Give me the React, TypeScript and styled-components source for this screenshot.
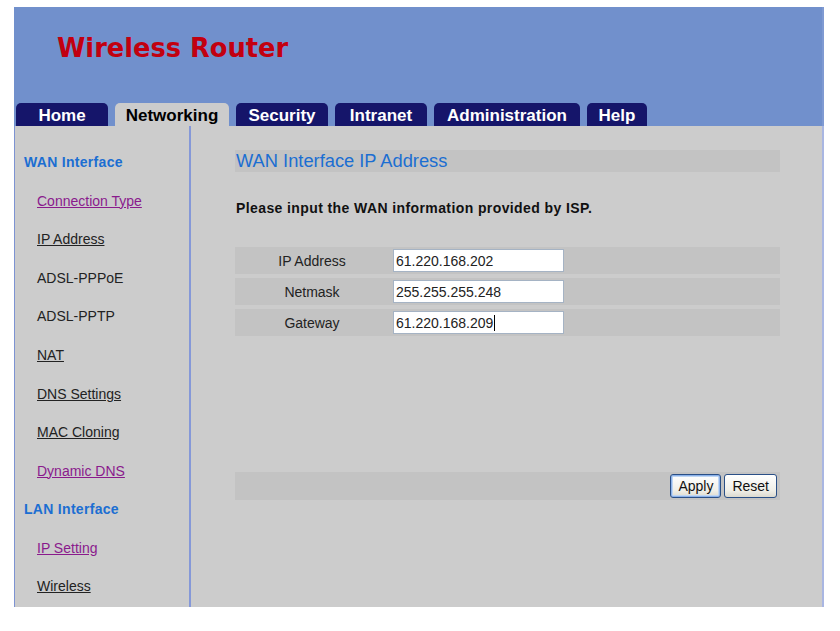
import React from "react";
import styled, { createGlobalStyle } from "styled-components";

const GlobalStyle = createGlobalStyle`
  html, body { margin: 0; padding: 0; background: #ffffff; }
  body { font-family: "Liberation Sans", Arial, sans-serif; }
  * { box-sizing: border-box; }
`;

const Frame = styled.div`
  margin: 7px 0 0 14px;
  width: 810px;
  display: flex;
  flex-direction: column;
`;

const Header = styled.header`
  height: 119px;
  background: #7190cc;
  display: flex;
  flex-direction: column;
  border-right: 2px solid #7f9ad2;
`;

const Title = styled.h1`
  margin: 28px 0 0 43px;
  font-family: "DejaVu Sans", Verdana, sans-serif;
  font-weight: bold;
  font-size: 25.7px;
  line-height: 26px;
  color: #c20010;
`;

const Tabs = styled.nav`
  margin-top: auto;
  display: flex;
  gap: 7px;
  padding-left: 2px;
`;

const Tab = styled.a<{ $active?: boolean; $width: number }>`
  height: 23px;
  width: ${(p) => p.$width}px;
  display: flex;
  align-items: center;
  justify-content: center;
  border-radius: 5px 5px 0 0;
  background: ${(p) => (p.$active ? "#cccccc" : "#15156a")};
  color: ${(p) => (p.$active ? "#000000" : "#ffffff")};
  font-size: 17px;
  font-weight: bold;
  text-decoration: none;
  padding-top: 2px;
  white-space: nowrap;
`;

const Body = styled.div`
  height: 481px;
  display: flex;
  background: #cccccc;
`;

const Sidebar = styled.aside`
  width: 177px;
  border-left: 1px solid #7d93d2;
  border-right: 2px solid #8598d8;
  padding: 17px 0 0 9px;
  display: flex;
  flex-direction: column;
`;

const SideItem = styled.div`
  height: 38.55px;
  display: flex;
  align-items: center;
`;

const Group = styled.span`
  font-size: 14px;
  font-weight: bold;
  letter-spacing: 0.3px;
  color: #1b6ed2;
`;

const NavLink = styled.a<{ $visited?: boolean; $plain?: boolean }>`
  margin-left: 13px;
  font-size: 14px;
  color: ${(p) => (p.$visited ? "#8a1a8c" : "#222222")};
  text-decoration: ${(p) => (p.$plain ? "none" : "underline")};
`;

const Main = styled.main`
  flex: 1;
  padding: 24px 42px 0 44px;
  border-right: 2px solid #a9b6e2;
  display: flex;
  flex-direction: column;
`;

const SectionBar = styled.h2`
  margin: 0;
  height: 22px;
  line-height: 22px;
  padding-left: 1px;
  background: #c3c3c3;
  color: #1b6ed2;
  font-size: 18.3px;
  font-weight: normal;
`;

const Intro = styled.p`
  margin: 28px 0 0 1px;
  font-size: 14px;
  line-height: 16px;
  font-weight: bold;
  letter-spacing: 0.4px;
  color: #111111;
`;

const FormTable = styled.div`
  margin-top: 31px;
  display: flex;
  flex-direction: column;
  gap: 4px;
`;

const FormRow = styled.div`
  height: 27px;
  display: grid;
  grid-template-columns: 154px 4px 171px 1fr;
  align-items: center;
  background: #c3c3c3;
`;

const Label = styled.span`
  grid-column: 1;
  text-align: center;
  font-size: 14px;
  color: #222222;
`;

const Field = styled.span`
  grid-column: 3;
  height: 23px;
  display: flex;
  align-items: center;
  padding-left: 2px;
  background: #ffffff;
  border: 1px solid #a5b3c4;
  font-size: 14px;
  color: #222222;
`;

const Caret = styled.span`
  display: inline-block;
  width: 1px;
  height: 16px;
  background: #000000;
  margin-left: 1px;
`;

const ButtonBar = styled.div`
  margin-top: 136px;
  height: 28px;
  background: #c3c3c3;
  display: flex;
  justify-content: flex-end;
  align-items: center;
  gap: 3px;
  padding-right: 3px;
`;

const Button = styled.button<{ $focus?: boolean }>`
  height: 24px;
  padding: 0 7px;
  font-family: "Liberation Sans", Arial, sans-serif;
  font-size: 14px;
  color: #111111;
  border-radius: 3px;
  border: 1px solid #2a4f86;
  background: linear-gradient(#ffffff, #f0efe8 70%, #dcdad0);
  box-shadow: ${(p) => (p.$focus ? "inset 0 0 0 1px #8cb2ea, inset 0 0 0 2px #c0d6f2" : "none")};
`;

const links: { label: string; visited?: boolean; plain?: boolean; group?: boolean }[] = [
  { label: "WAN Interface", group: true },
  { label: "Connection Type", visited: true },
  { label: "IP Address" },
  { label: "ADSL-PPPoE", plain: true },
  { label: "ADSL-PPTP", plain: true },
  { label: "NAT" },
  { label: "DNS Settings" },
  { label: "MAC Cloning" },
  { label: "Dynamic DNS", visited: true },
  { label: "LAN Interface", group: true },
  { label: "IP Setting", visited: true },
  { label: "Wireless" },
];

const tabs = [
  { label: "Home", width: 92 },
  { label: "Networking", width: 114 },
  { label: "Security", width: 92 },
  { label: "Intranet", width: 92 },
  { label: "Administration", width: 146 },
  { label: "Help", width: 60 },
];

const fields = [
  { label: "IP Address", value: "61.220.168.202" },
  { label: "Netmask", value: "255.255.255.248" },
  { label: "Gateway", value: "61.220.168.209", caret: true },
];

export default function App() {
  return (
    <>
      <GlobalStyle />
      <Frame>
        <Header>
          <Title>Wireless Router</Title>
          <Tabs>
            {tabs.map((t) => (
              <Tab key={t.label} $width={t.width} $active={t.label === "Networking"}>
                {t.label}
              </Tab>
            ))}
          </Tabs>
        </Header>
        <Body>
          <Sidebar>
            {links.map((l) => (
              <SideItem key={l.label}>
                {l.group ? (
                  <Group>{l.label}</Group>
                ) : (
                  <NavLink $visited={l.visited} $plain={l.plain}>
                    {l.label}
                  </NavLink>
                )}
              </SideItem>
            ))}
          </Sidebar>
          <Main>
            <SectionBar>WAN Interface IP Address</SectionBar>
            <Intro>Please input the WAN information provided by ISP.</Intro>
            <FormTable>
              {fields.map((f) => (
                <FormRow key={f.label}>
                  <Label>{f.label}</Label>
                  <Field role="textbox">
                    {f.value}
                    {f.caret && <Caret />}
                  </Field>
                </FormRow>
              ))}
            </FormTable>
            <ButtonBar>
              <Button $focus>Apply</Button>
              <Button>Reset</Button>
            </ButtonBar>
          </Main>
        </Body>
      </Frame>
    </>
  );
}
